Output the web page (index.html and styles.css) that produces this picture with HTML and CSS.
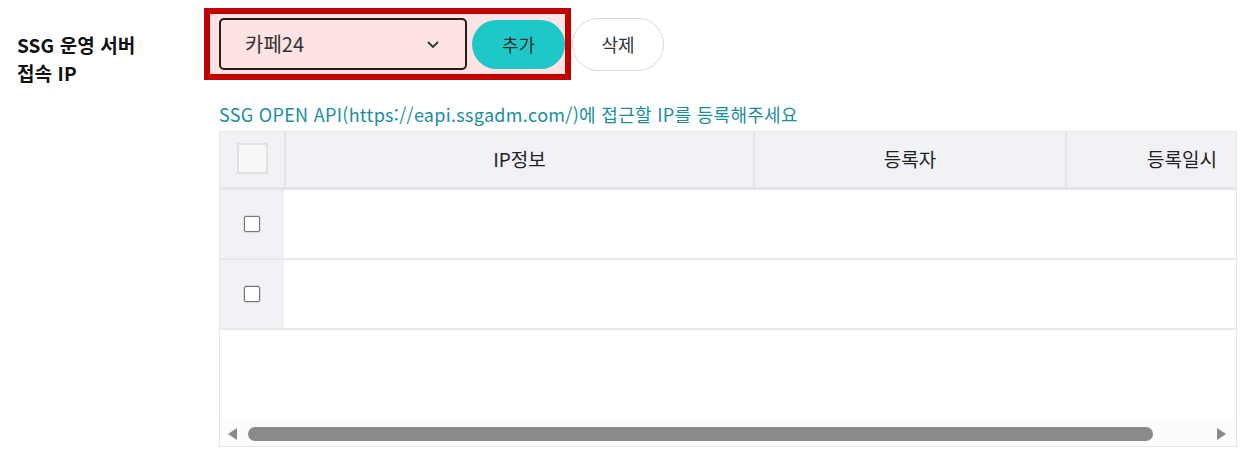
FILE: index.html
```html
<!DOCTYPE html>
<html lang="ko">
<head>
<meta charset="utf-8">
<link rel="stylesheet" href="styles.css">
</head>
<body>
<div class="field">
  <div class="field-label">
    <span class="label-line">SSG 운영 서버</span>
    <span class="label-line">접속 IP</span>
  </div>
  <div class="field-body">
    <div class="controls">
      <div class="highlight">
        <div class="select">
          <span class="select-text">카페24</span>
          <svg class="chev" width="14" height="9" viewBox="0 0 14 9"><path d="M2 2 L7 7 L12 2" fill="none" stroke="#333" stroke-width="1.8"/></svg>
        </div>
        <button class="btn btn-add">추가</button>
      </div>
      <button class="btn btn-del">삭제</button>
    </div>
    <p class="hint">SSG OPEN API(https://eapi.ssgadm.com/)에 접근할 IP를 등록해주세요</p>
    <div class="grid-wrap">
      <div class="grid-scroll">
        <div class="grid">
          <div class="row head">
            <div class="cell chk"><span class="box-head"></span></div>
            <div class="cell c-ip">IP정보</div>
            <div class="cell c-user">등록자</div>
            <div class="cell c-date">등록일시</div>
          </div>
          <div class="row body">
            <div class="cell chk"><span class="box"></span></div>
            <div class="cell c-ip"></div>
            <div class="cell c-user"></div>
            <div class="cell c-date"></div>
          </div>
          <div class="row body">
            <div class="cell chk"><span class="box"></span></div>
            <div class="cell c-ip"></div>
            <div class="cell c-user"></div>
            <div class="cell c-date"></div>
          </div>
        </div>
      </div>
      <div class="hscroll">
        <span class="arrow arrow-l"></span>
        <div class="track"><div class="thumb"></div></div>
        <span class="arrow arrow-r"></span>
      </div>
    </div>
  </div>
</div>
</body>
</html>
```
FILE: styles.css
```css
* { box-sizing: border-box; }
html, body { margin: 0; padding: 0; background: #fff; }
body {
  font-family: "Noto Sans CJK KR", "Noto Sans", sans-serif;
  color: #222;
  width: 1253px;
  height: 463px;
  overflow: hidden;
}
.field {
  display: flex;
  padding-top: 8px;
}
.field-label {
  width: 204px;
  padding: 23px 0 0 17px;
  display: flex;
  flex-direction: column;
  font-size: 19px;
  font-weight: 700;
  color: #111;
  letter-spacing: 0.1px;
}
.label-line {
  display: block;
  line-height: 28px;
  height: 28px;
}
.field-body {
  flex: 1;
  display: flex;
  flex-direction: column;
}
.controls {
  display: flex;
  align-items: center;
}
.highlight {
  display: flex;
  align-items: center;
  width: 367px;
  height: 72px;
  border: 6px solid #c00000;
  background: #fde3e3;
  padding-left: 9px;
  overflow: hidden;
}
.select {
  width: 249px;
  height: 52px;
  border: 2px solid #2a1a1a;
  border-radius: 5px;
  display: flex;
  align-items: center;
  justify-content: space-between;
  padding: 0 25px 0 24px;
  font-size: 20px;
  color: #333;
}
.select-text { line-height: 1; }
.btn {
  font-family: inherit;
  font-size: 18px;
  color: #333;
  border-radius: 26px;
  cursor: pointer;
  padding: 0;
}
.btn-add {
  margin-left: 5px;
  width: 93px;
  height: 49px;
  border: none;
  background: #1ec8c8;
  border-radius: 25px;
  flex-shrink: 0;
}
.btn-del {
  margin-left: 1px;
  width: 92px;
  height: 53px;
  border: 1px solid #d9d9d9;
  background: #fff;
}
.hint {
  margin: 21px 0 0 15px;
  font-size: 18px;
  line-height: 27px;
  color: #1b8ea0;
  letter-spacing: 0.3px;
}
.grid-wrap {
  margin: 3px 0 0 15px;
  width: 1018px;
  height: 316px;
  border: 1px solid #e6e6e6;
  display: flex;
  flex-direction: column;
}
.grid-scroll {
  flex: 1;
  overflow: hidden;
}
.grid {
  width: 1100px;
}
.row {
  display: flex;
}
.cell {
  display: flex;
  align-items: center;
  justify-content: center;
}
.head {
  height: 58px;
  background: #f1f2f6;
  border-bottom: 3px solid #e3e4e8;
  font-size: 19px;
  color: #222;
}
.head .cell { padding-bottom: 2px; }
.head .cell + .cell { border-left: 2px solid #e3e4e8; }
.chk { width: 64px; flex-shrink: 0; }
.c-ip { width: 469px; flex-shrink: 0; }
.c-user { width: 312px; flex-shrink: 0; }
.c-date { width: 232px; flex-shrink: 0; }
.body { height: 70px; border-bottom: 2px solid #e8e8e8; }
.body .chk { background: #f1f2f6; }
.box-head {
  width: 31px;
  height: 31px;
  background: #f7f7f7;
  border: 2px solid #e1e1e1;
}
.box {
  width: 16px;
  height: 16px;
  background: #fff;
  border: 1px solid #767676;
  border-radius: 2px;
  box-shadow: inset 0 0 0 1px #fff, 0 0 0 0.5px #bbb;
}
.hscroll {
  height: 24px;
  background: #fcfcfc;
  display: flex;
  align-items: center;
  padding: 0 10px 0 8px;
}
.arrow {
  width: 0;
  height: 0;
  border-top: 6px solid transparent;
  border-bottom: 6px solid transparent;
}
.arrow-l { border-right: 9px solid #8a8a8a; }
.arrow-r { border-left: 9px solid #8a8a8a; }
.track {
  flex: 1;
  padding: 0 64px 0 11px;
}
.thumb {
  height: 14px;
  background: #8a8a8a;
  border-radius: 7px;
}
```
